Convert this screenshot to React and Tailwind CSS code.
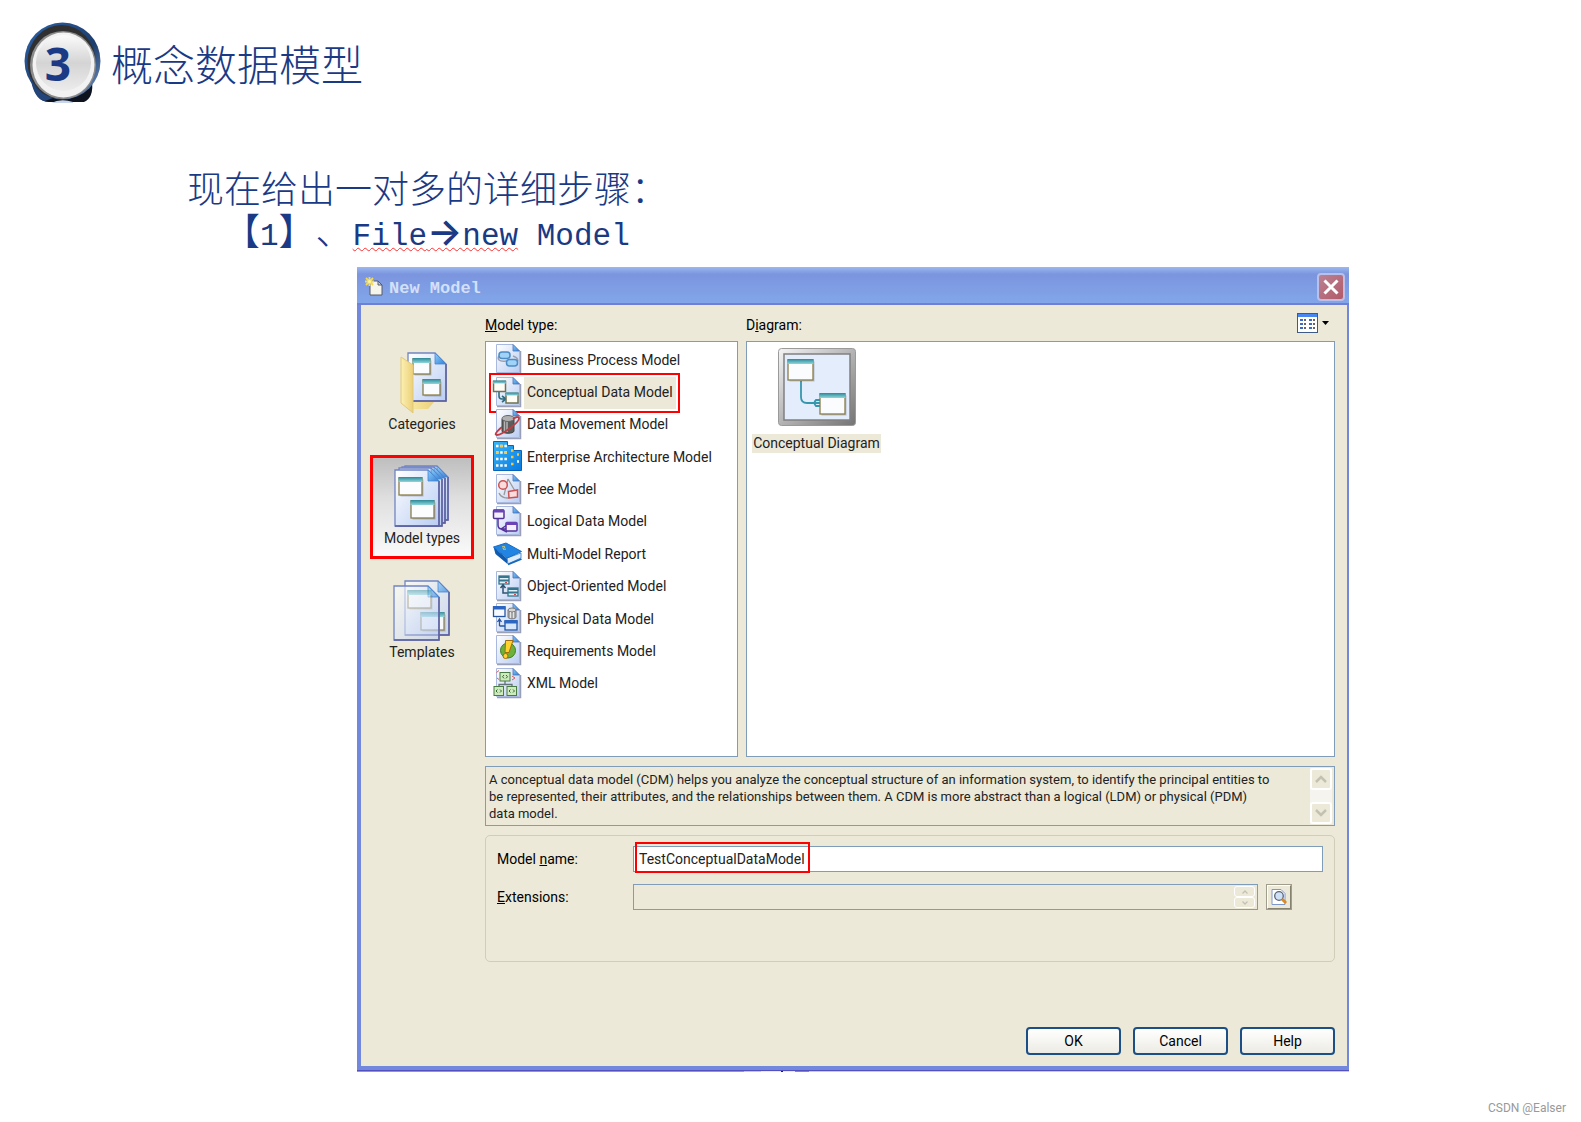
import { useState } from 'react';

const MODEL_TYPES = [
    { name: 'Business Process Model',        Icon: BusinessIcon },
    { name: 'Conceptual Data Model',         Icon: ConceptualIcon },
    { name: 'Data Movement Model',           Icon: MovementIcon },
    { name: 'Enterprise Architecture Model', Icon: EnterpriseIcon },
    { name: 'Free Model',                    Icon: FreeIcon },
    { name: 'Logical Data Model',            Icon: LogicalIcon },
    { name: 'Multi-Model Report',            Icon: ReportIcon },
    { name: 'Object-Oriented Model',         Icon: ObjectIcon },
    { name: 'Physical Data Model',           Icon: PhysicalIcon },
    { name: 'Requirements Model',            Icon: RequirementsIcon },
    { name: 'XML Model',                     Icon: XmlIcon },
];

const VIEWS = [
    { name: 'Categories',  Icon: CategoriesIcon },
    { name: 'Model types', Icon: ModelTypesIcon },
    { name: 'Templates',   Icon: TemplatesIcon },
];

const DESCRIPTION =
    'A conceptual data model (CDM) helps you analyze the conceptual structure of an information system, to identify the principal entities to be represented, their attributes, and the relationships between them. A CDM is more abstract than a logical (LDM) or physical (PDM) data model.';

/* ---------- icons ---------- */

// Shared gradients, referenced by id from every icon below
function Gradients() {
    return (
        <svg width="0" height="0" className="absolute" aria-hidden="true">
            <defs>
                <linearGradient id="paper" x1="0" y1="0" x2="1" y2="1">
                    <stop offset="0" stopColor="#ffffff" />
                    <stop offset="1" stopColor="#b9cdf3" />
                </linearGradient>
                <linearGradient id="fold" x1="0" y1="0" x2="1" y2="1">
                    <stop offset="0" stopColor="#8fd0fb" />
                    <stop offset="1" stopColor="#2f7fd8" />
                </linearGradient>
                <linearGradient id="teal" x1="0" y1="0" x2="0" y2="1">
                    <stop offset="0" stopColor="#2b8795" />
                    <stop offset="1" stopColor="#8ed6dc" />
                </linearGradient>
                <linearGradient id="folder" x1="0" y1="0" x2="1" y2="0">
                    <stop offset="0" stopColor="#fdf0b0" />
                    <stop offset="1" stopColor="#ebd07a" />
                </linearGradient>
                <linearGradient id="metal" x1="0" y1="0" x2="1" y2="1">
                    <stop offset="0" stopColor="#f4f4f4" />
                    <stop offset="0.5" stopColor="#b4b4b4" />
                    <stop offset="1" stopColor="#747474" />
                </linearGradient>
                <linearGradient id="building" x1="0" y1="0" x2="1" y2="1">
                    <stop offset="0" stopColor="#35b5f8" />
                    <stop offset="1" stopColor="#0a7ae0" />
                </linearGradient>
                <linearGradient id="knob" x1="0" y1="0" x2="0" y2="1">
                    <stop offset="0" stopColor="#fbfbfb" />
                    <stop offset="0.5" stopColor="#d4d4d4" />
                    <stop offset="1" stopColor="#ececec" />
                </linearGradient>
                <linearGradient id="rim" x1="0" y1="0" x2="1" y2="1">
                    <stop offset="0" stopColor="#2d62a8" />
                    <stop offset="0.6" stopColor="#1c3c6c" />
                    <stop offset="1" stopColor="#7d9cc8" />
                </linearGradient>
            </defs>
        </svg>
    );
}

function RowIcon({ page = true, children }) {
    return (
        <svg viewBox="0 0 32 32" className="size-8 shrink-0" fill="none" aria-hidden="true">
            {page && (
                <>
                    <path d="M5 29.500h23.500V7" stroke="#9a9fb8" strokeWidth="1.500" />
                    <path d="M4.500 0.500H21l6.500 6.500V28.500H4.500z" fill="url(#paper)" stroke="#a9b8de" />
                    <path d="M21 0.500V7h6.500z" fill="url(#fold)" stroke="#4a74b8" strokeWidth="0.800" />
                </>
            )}
            {children}
        </svg>
    );
}

function BusinessIcon() {
    return (
        <RowIcon>
            <path d="M14 17c-7 1-9-2-7-5M21 12c6 2 6 6 2 8" stroke="#9aa0b0" strokeWidth="1.500" />
            <rect x="7" y="8" width="11" height="6.500" rx="3" fill="#9fd3f7" stroke="#4d8cc4" strokeWidth="1.500" />
            <rect x="14.500" y="15.500" width="11" height="6.500" rx="3" fill="#9fd3f7" stroke="#4d8cc4" strokeWidth="1.500" />
        </RowIcon>
    );
}

function ConceptualIcon() {
    return (
        <RowIcon>
            <path d="M7 14v5q0 3 3 3h5M10 19l4 3-4 3" stroke="#2f6d80" strokeWidth="1.600" />
            <rect x="1.500" y="4.500" width="12" height="10" fill="#fdfdf6" stroke="#6d7251" strokeWidth="1.500" />
            <rect x="1" y="3.500" width="13" height="3" fill="url(#teal)" />
            <rect x="14" y="16.500" width="12" height="9.500" fill="#fdfdf6" stroke="#6d7251" strokeWidth="1.500" />
            <rect x="13.500" y="15.500" width="13" height="3" fill="url(#teal)" />
        </RowIcon>
    );
}

function MovementIcon() {
    return (
        <RowIcon>
            <path d="M10 10v12c0 3 12 3 12 0V10z" fill="#5c5c5c" stroke="#444" />
            <path d="M12.500 12v11M15 12v11" stroke="#b5b5b5" strokeWidth="1.500" />
            <ellipse cx="16" cy="9.500" rx="6" ry="3" fill="#b0b0b0" stroke="#666" />
            <path d="M10 18c-6 5-8 8-5 8 5 0 23-13 22-17-.5-2-4-.5-6 1" stroke="#c23b42" strokeWidth="1.800" />
        </RowIcon>
    );
}

function EnterpriseIcon() {
    return (
        <RowIcon page={false}>
            <path d="M1.500 0.500h14v4h6v5h8v20h-28z" fill="url(#building)" stroke="#0b63b8" />
            <path d="M4 5h11M4 11.500h11M4 18h11M4 24.500h11" stroke="#fff" strokeWidth="2.500" strokeDasharray="2.500 1.700" />
            <path d="M8.200 5h2.500M12.400 11.500h2.500M4 11.500h2.500" stroke="#ffc52e" strokeWidth="2.500" />
            <path d="M19 9.500h2.500M25 13.500h2M19 16h2.500M19 23h2.500" stroke="#ffc52e" strokeWidth="2.500" />
            <path d="M25 20.500h2" stroke="#fff" strokeWidth="2.500" />
        </RowIcon>
    );
}

function FreeIcon() {
    return (
        <RowIcon>
            <path d="M16 5l7 12M16 5l-4 16M7 19c2 5 8 6 12 4" stroke="#9a9a9a" strokeWidth="1.300" />
            <circle cx="11" cy="11" r="4.300" fill="#fbdcdc" stroke="#cc5252" strokeWidth="1.500" />
            <path d="M16.500 17.500l9-1.500v7l-8.500 1z" fill="#fbdcdc" stroke="#cc5252" strokeWidth="1.500" />
        </RowIcon>
    );
}

function LogicalIcon() {
    return (
        <RowIcon>
            <path d="M6 13v6q0 4 4 4h5M9 23l6-4M9 23l6 3" stroke="#54329c" strokeWidth="1.500" />
            <rect x="1.500" y="4" width="10.500" height="8.500" rx="1" fill="#f3effc" stroke="#54329c" strokeWidth="1.500" />
            <rect x="1.500" y="3.500" width="10.500" height="3" fill="#6b45b8" />
            <rect x="14" y="16.500" width="11" height="8.500" rx="1" fill="#f3effc" stroke="#54329c" strokeWidth="1.500" />
            <rect x="14" y="16" width="11" height="3" fill="#6b45b8" />
        </RowIcon>
    );
}

function ReportIcon() {
    return (
        <RowIcon page={false}>
            <path d="M1.500 9l2 7 12 10v-5z" fill="#0f5bb0" />
            <path d="M15 20l14-5v5l-13 6z" fill="#dcecfb" stroke="#2b78c8" strokeWidth="0.800" />
            <path d="M1.500 9L14 5l15.500 8.500L15 20z" fill="#2385e2" stroke="#1a6cc8" />
            <path d="M16 26.500l13.500-5.500" stroke="#1566bd" strokeWidth="1.800" />
            <path d="M10 9c3-1.500 4 .5 2 1s-1 2 2 1" stroke="#e4cf5a" />
        </RowIcon>
    );
}

function ObjectIcon() {
    return (
        <RowIcon>
            <rect x="7" y="5" width="10" height="8" fill="#dff0f8" stroke="#35758e" strokeWidth="1.300" />
            <path d="M7 6h10M7 9.500h10" stroke="#35758e" strokeWidth="2" />
            <path d="M11 13v9h6M8.500 17l2.500-3 2.500 3" stroke="#2f5372" strokeWidth="1.500" />
            <rect x="16" y="17" width="10" height="8" fill="#dff0f8" stroke="#35758e" strokeWidth="1.300" />
            <path d="M16 18h10M16 21.500h10" stroke="#35758e" strokeWidth="2" />
            <path d="M13 11.500h2M22 23.500h2" stroke="#d34444" />
        </RowIcon>
    );
}

function PhysicalIcon() {
    return (
        <RowIcon>
            <path d="M16 7v7c0 2.500 8 2.500 8 0V7z" fill="#a8a8a8" stroke="#7b7b7b" />
            <ellipse cx="20" cy="7" rx="4" ry="2" fill="#d5d5d5" stroke="#7b7b7b" />
            <path d="M18.500 9v6M21.500 9v6" stroke="#e4e4e4" />
            <rect x="1.500" y="4" width="11.500" height="9.500" fill="#f6faff" stroke="#2456a4" strokeWidth="1.300" />
            <rect x="1" y="3" width="12.500" height="3.500" fill="#2d66c0" />
            <path d="M7.500 23h6M7.500 16v7M5.500 19l2-3 2 3" stroke="#2456a4" strokeWidth="1.300" />
            <rect x="13" y="18" width="12" height="9" fill="#d6e6fb" stroke="#2456a4" strokeWidth="1.300" />
            <rect x="12.500" y="17" width="13" height="3.500" fill="#2d66c0" />
        </RowIcon>
    );
}

function RequirementsIcon() {
    return (
        <RowIcon>
            <circle cx="16" cy="15.500" r="7.500" fill="#6cb23a" stroke="#3f7d22" />
            <path d="M13.500 5.500h7.500l-4 12h-4z" fill="#ffd22e" stroke="#a06c10" />
            <circle cx="13.500" cy="21" r="2.500" fill="#ffd22e" stroke="#a06c10" />
        </RowIcon>
    );
}

function XmlIcon() {
    return (
        <RowIcon>
            <path d="M13 13v4M7 19v-2.500h13V19" stroke="#66717c" strokeWidth="1.300" />
            <rect x="8" y="4.500" width="10" height="8.500" fill="#cdebbd" stroke="#4b7b45" />
            <rect x="2" y="18.500" width="9.500" height="9" fill="#cdebbd" stroke="#4b7b45" />
            <rect x="15" y="18.500" width="9.500" height="9" fill="#cdebbd" stroke="#4b7b45" />
            <path d="M12 7l-1.500 1.700 1.500 1.700M14 7l1.500 1.700L14 10.400M5.500 21.500L4 23l1.500 1.500M8 21.500L9.500 23 8 24.500M18.500 21.500L17 23l1.500 1.500M21 21.500l1.500 1.500-1.500 1.500" stroke="#2f6a2d" />
            <path d="M7 2.500L4.500 4.500M20 8l3 2-3 2M7 11.500L5 10" stroke="#d95b5b" />
        </RowIcon>
    );
}

// Small entity window used by the large icons
function Entity({ x, y, w = 23, h = 17, opacity = 1 }) {
    return (
        <g opacity={opacity}>
            <rect x={x + 1.5} y={y + 1.5} width={w} height={h} fill="#00000030" />
            <rect x={x} y={y} width={w} height={h} fill="#fbfcfd" stroke="#8a7d4c" strokeWidth="1.300" />
            <rect x={x - 0.5} y={y - 1} width={w + 1} height="5" fill="url(#teal)" />
        </g>
    );
}

function Sheet({ x, y, w, h, f = 11, opacity = 1 }) {
    return (
        <g fillOpacity={opacity}>
            <path d={`M${x} ${y}h${w - f}l${f} ${f}v${h - f}h${-w}z`} fill="url(#paper)" stroke="#7084c4" strokeWidth="1.300" />
            <path d={`M${x + w} ${y + f}v${h - f}h${-w}`} stroke="#5c5f9c" strokeWidth="1.500" fill="none" />
            <path d={`M${x + w - f} ${y}v${f}h${f}z`} fill="url(#fold)" stroke="#4a86cf" strokeWidth="0.800" />
        </g>
    );
}

function CategoriesIcon() {
    return (
        <svg viewBox="0 0 64 64" className="size-16" aria-hidden="true">
            <path d="M12 50l32 2-6 7H20z" fill="url(#folder)" />
            <Sheet x={18} y={3} w={38} h={48} />
            <Entity x={23} y={9} w={17} h={15} />
            <Entity x={33} y={30} w={17} h={15} />
            <path d="M11 7l12 8v48L11 53z" fill="url(#folder)" stroke="#e2c978" />
        </svg>
    );
}

function ModelTypesIcon() {
    return (
        <svg viewBox="0 0 64 64" className="size-16" aria-hidden="true">
            <Sheet x={15} y={2} w={43} h={54} />
            <Sheet x={12} y={3} w={43} h={56} />
            <Sheet x={9} y={4} w={43} h={58} />
            <Sheet x={5} y={6} w={44} h={56} />
            <Entity x={9} y={14} />
            <Entity x={21} y={37} />
        </svg>
    );
}

function TemplatesIcon() {
    return (
        <svg viewBox="0 0 64 64" className="size-16" aria-hidden="true">
            <Sheet x={15} y={3} w={44} h={54} opacity={0.7} />
            <Entity x={31} y={35} opacity={0.9} />
            <Sheet x={4} y={8} w={45} h={54} opacity={0.6} />
            <Entity x={18} y={13} opacity={0.45} />
        </svg>
    );
}

function DiagramIcon() {
    return (
        <svg viewBox="0 0 78 78" className="size-[78px]" aria-hidden="true">
            <rect x="0.500" y="0.500" width="77" height="77" rx="3" fill="url(#metal)" stroke="#9a9a9a" />
            <rect x="6" y="6" width="66" height="66" fill="#e3edfc" stroke="#808080" strokeWidth="1.500" />
            <path d="M23 33v16q0 6 6 6h13M42 52h-4q-3 3 0 6h4" fill="none" stroke="#3597ae" strokeWidth="1.800" />
            <Entity x={10} y={12} w={25} h={20} />
            <Entity x={42} y={46} w={25} h={20} />
        </svg>
    );
}

function NewDocIcon() {
    return (
        <svg viewBox="0 0 20 20" className="size-5" aria-hidden="true">
            <path d="M5 4h8l4 4v10H5z" fill="#f6f5ec" stroke="#565a66" />
            <path d="M13 4v4h4z" fill="#c9cdd8" stroke="#565a66" />
            <path d="M4.500 0v9M0 4.500h9M1 1l7 7M8 1L1 8" stroke="#f5d94a" strokeWidth="1.800" />
            <circle cx="4.500" cy="4.500" r="1.500" fill="#fff6b8" />
        </svg>
    );
}

function ListViewIcon() {
    return (
        <svg viewBox="0 0 21 20" className="h-5 w-[21px]" aria-hidden="true">
            <rect x="0.500" y="0.500" width="20" height="19" fill="#fff" stroke="#3c5a8a" />
            <rect x="1" y="1" width="19" height="3" fill="#4a86f0" />
            <path d="M3 7h3M12 7h3M3 11h3M12 11h3M3 15h3M12 15h3" stroke="#3d68c4" strokeWidth="2" />
            <path d="M7 7h2M16 7h2M7 11h2M16 11h2M7 15h2M16 15h2" stroke="#333" strokeWidth="1.500" />
        </svg>
    );
}

function BrowseIcon() {
    return (
        <svg viewBox="0 0 18 18" className="size-[18px]" aria-hidden="true">
            <path d="M2 1.500h9l4 4v11H2z" fill="#fff" stroke="#7e98c8" />
            <circle cx="9" cy="8" r="4.300" fill="#cfe2f5" stroke="#5a6478" strokeWidth="1.300" />
            <path d="M12 11l4 4" stroke="#d98a2b" strokeWidth="3" />
        </svg>
    );
}

function Chevron({ up = false, className }) {
    return (
        <svg viewBox="0 0 12 8" className={className} fill="none" aria-hidden="true">
            <path d={up ? 'M1 7l5-5 5 5' : 'M1 1l5 5 5-5'} stroke="#c3c2b2" strokeWidth="2.500" />
        </svg>
    );
}

function Badge() {
    return (
        <div className="relative grid h-[81px] w-[78px] place-items-center">
            <svg viewBox="0 0 78 81" className="absolute inset-0" aria-hidden="true">
                <path d="M7 56q4 24 18 24h35q10-4 8-22z" fill="#0d1420" />
                <path d="M6 54q4 24 15 25l8-3-14-22z" fill="#24447a" />
                <path d="M27 81q10-5 22-1v1z" fill="#c8d5ea" />
                <ellipse cx="38.500" cy="39" rx="38" ry="38.500" fill="url(#rim)" />
                <ellipse cx="37.500" cy="40" rx="34" ry="37" fill="#303030" />
                <ellipse cx="39" cy="43" rx="33" ry="34" fill="#8c8c8c" />
                <ellipse cx="39.500" cy="43" rx="31" ry="32.500" fill="#f2f2f2" />
                <ellipse cx="39.500" cy="41" rx="27.500" ry="28" fill="url(#knob)" />
            </svg>
            <span className="relative pr-[10px] font-['Open_Sans',sans-serif] text-[46px]/[64px] font-bold">3</span>
        </div>
    );
}

/* ---------- dialog ---------- */

function ViewBar({ view, onSelect }) {
    return (
        <nav className="flex w-[124px] shrink-0 flex-col gap-[10px] pt-9 pl-[9px]">
            {VIEWS.map(({ name, Icon }) => (
                <button key={name} onClick={() => onSelect(name)}
                    className={`flex size-[104px] flex-col items-center border-[3px] pt-[6px] ${
                        view === name ? 'border-[#ff0000] bg-linear-to-b from-[#bebebe] via-[#dedede] via-40% to-[#fafafa]' : 'border-transparent'
                    }`}>
                    <Icon />
                    <span className="leading-5">{name}</span>
                </button>
            ))}
        </nav>
    );
}

function ModelTypeList({ selected, onSelect }) {
    return (
        <ul className="flex h-[416px] flex-col border border-[#7f9db9] bg-white pt-[2px] pb-[56px] pl-px">
            {MODEL_TYPES.map(({ name, Icon }) => (
                <li key={name} className="flex min-h-0 flex-1 items-center">
                    <button onClick={() => onSelect(name)} className="relative flex items-center pl-[5px] text-left">
                        <Icon />
                        <span className={`flex h-8 items-center pr-[3px] pl-[3px] ${selected === name ? 'bg-[#ece9d8]' : ''}`}>
                            {name}
                        </span>
                        {selected === name && (
                            <span className="absolute -inset-y-1 -right-1 left-[2px] border-2 border-[#ff0000]" />
                        )}
                    </button>
                </li>
            ))}
        </ul>
    );
}

function DialogButton({ children }) {
    return (
        <button className="h-7 w-[95px] rounded-[4px] border-2 border-[#1c4f86] bg-linear-to-b from-white to-[#ecebe4] text-black">
            {children}
        </button>
    );
}

function NewModelDialog() {
    const [view, setView] = useState('Model types');
    const [type, setType] = useState('Conceptual Data Model');
    const [modelName, setModelName] = useState('TestConceptualDataModel');

    return (
        <section className="mr-[232px] ml-[357px] font-[Roboto,sans-serif] text-[14px] text-[#222]">
            <header className="flex h-[38px] items-center border-b-2 border-[#6d80d6] bg-linear-to-b from-[#9cb8ee] via-[#7b95de] via-20% to-[#82a6ea] pt-1 pr-1 pl-2">
                <NewDocIcon />
                <h2 className="ml-1 flex-1 pt-1 font-['Liberation_Mono',monospace] text-[17px] font-bold text-[#d3e0f8]">New Model</h2>
                <button aria-label="Close"
                    className="grid size-7 place-items-center rounded-[4px] border-2 border-[#b9c0ea] bg-linear-to-br from-[#b98295] to-[#b25a68]">
                    <svg viewBox="0 0 16 16" className="size-4" aria-hidden="true">
                        <path d="M1.500 1.500l13 13M14.500 1.500l-13 13" stroke="#fff" strokeWidth="3" />
                    </svg>
                </button>
            </header>

            <div className="flex border-r-2 border-b-4 border-l-4 border-[#7288dc] bg-[#ece9d8]">
                <ViewBar view={view} onSelect={setView} />

                <div className="min-w-0 flex-1 pr-3 pb-[11px]">
                    <div className="flex gap-2">
                        <div className="w-[253px] shrink-0">
                            <h3 className="flex h-9 items-center pt-1 text-black"><span><u>M</u>odel type:</span></h3>
                            <ModelTypeList selected={type} onSelect={setType} />
                        </div>
                        <div className="min-w-0 flex-1">
                            <div className="flex h-9 items-center justify-between pt-1">
                                <h3 className="text-black">D<u>i</u>agram:</h3>
                                <button aria-label="View" className="mr-[6px] flex items-center gap-1 pb-1">
                                    <ListViewIcon />
                                    <svg viewBox="0 0 7 4" className="h-1 w-[7px]" aria-hidden="true"><path d="M0 0h7L3.500 4z" /></svg>
                                </button>
                            </div>
                            <div className="h-[416px] border border-[#7f9db9] bg-white pt-[6px] pl-[5px]">
                                <button className="flex w-[129px] flex-col items-center gap-2">
                                    <DiagramIcon />
                                    <span className="w-full bg-[#ece9d8] leading-[19px] whitespace-nowrap">Conceptual Diagram</span>
                                </button>
                            </div>
                        </div>
                    </div>

                    {/* Description */}
                    <div className="mt-[9px] flex h-[60px] border border-[#7f9db9] py-px pr-[2px]">
                        <textarea readOnly aria-label="Description" value={DESCRIPTION}
                            className="min-w-0 flex-1 resize-none overflow-hidden pt-[3px] pr-9 pl-[3px] text-[13px] leading-[17px] outline-none" />
                        <div className="flex w-[22px] flex-col justify-between bg-[#f5f4ee]">
                            <button disabled aria-label="Scroll up" className="grid h-[22px] place-items-center rounded-[3px] border-2 border-white bg-[#ece9d8]">
                                <Chevron up className="h-2 w-3" />
                            </button>
                            <button disabled aria-label="Scroll down" className="grid h-[22px] place-items-center rounded-[3px] border-2 border-white bg-[#ece9d8]">
                                <Chevron className="h-2 w-3" />
                            </button>
                        </div>
                    </div>

                    {/* Name and extensions */}
                    <div className="mt-[9px] flex h-[127px] flex-col gap-3 rounded-[5px] border border-[#cfceb8] px-[11px] pt-[10px]">
                        <div className="flex h-[26px] items-center">
                            <label htmlFor="model-name" className="w-[136px] shrink-0 text-black">Model <u>n</u>ame:</label>
                            <div className="relative h-full flex-1">
                                <input id="model-name" value={modelName} onChange={(e) => setModelName(e.target.value)}
                                    className="size-full border border-[#7f9db9] bg-white pl-[5px] outline-none" />
                                <span className="pointer-events-none absolute -top-1 -bottom-px left-[2px] w-[175px] border-2 border-[#ff0000]" />
                            </div>
                        </div>
                        <div className="flex h-[26px] items-center">
                            <label htmlFor="extensions" className="w-[136px] shrink-0 text-black"><u>E</u>xtensions:</label>
                            <div className="flex h-full flex-1 border border-[#7f9db9] py-px pr-[2px]">
                                <input id="extensions" readOnly className="min-w-0 flex-1 outline-none" />
                                <div className="flex w-[21px] flex-col">
                                    <button disabled aria-label="Previous" className="grid flex-1 place-items-center rounded-[3px] border border-white">
                                        <Chevron up className="h-1 w-[6px]" />
                                    </button>
                                    <button disabled aria-label="Next" className="grid flex-1 place-items-center rounded-[3px] border border-white">
                                        <Chevron className="h-1 w-[6px]" />
                                    </button>
                                </div>
                            </div>
                            <button aria-label="Browse extensions"
                                className="mr-[31px] ml-2 grid size-[26px] place-items-center border-2 border-t-white border-r-[#85826f] border-b-[#85826f] border-l-white outline-1 -outline-offset-1 outline-[#a09d8c]">
                                <BrowseIcon />
                            </button>
                        </div>
                    </div>

                    <div className="mt-[65px] flex justify-end gap-3">
                        <DialogButton>OK</DialogButton>
                        <DialogButton>Cancel</DialogButton>
                        <DialogButton>Help</DialogButton>
                    </div>
                </div>
            </div>
            <div className="h-px bg-[#5450c0]" />
            {/* Sliver of the window behind */}
            <div className="flex h-px">
                <span className="w-[387px] bg-[#8d93dc]" />
                <span className="w-[17px] bg-[#b4c8fa]" />
                <span className="w-5 bg-[#efe6dc]" />
                <span className="w-[2px] bg-[#222]" />
                <span className="w-3 bg-[#efe6dc]" />
                <span className="w-[14px] bg-[#8e8a84]" />
                <span className="flex-1 bg-[#d6ccb4]" />
            </div>
        </section>
    );
}

function Mono({ children }) {
    return <span className="font-['Liberation_Mono',monospace] text-[31px] leading-none">{children}</span>;
}

export default function App() {
    return (
        <main className="bg-white text-[#1a3a85]">
            <Gradients />
            <header className="flex items-center gap-[9px] pt-[22px] pl-6">
                <Badge />
                <h1 className="font-['Noto_Sans_CJK_SC',sans-serif] text-[42px]/[60px] font-light">概念数据模型</h1>
            </header>

            <div className="mt-[63px] pl-[187px] font-['Noto_Sans_CJK_SC',sans-serif] text-[37px] font-light whitespace-nowrap [text-spacing-trim:space-all]">
                <p className="h-11 leading-[42px]">现在给出一对多的详细步骤：</p>
                <p className="h-11 pl-9 leading-[38px]">
                    【<Mono>1</Mono>】、
                    <span className="underline decoration-[#ff3030] decoration-wavy decoration-1 underline-offset-2">
                        <Mono>File</Mono>
                        <span className="font-[Inter,sans-serif] text-[37px] leading-none font-semibold">→</span>
                        <Mono>new</Mono>
                    </span>
                    <Mono>&nbsp;Model</Mono>
                </p>
            </div>

            <div className="pt-[13px]">
                <NewModelDialog />
            </div>

            <footer className="mt-7 pr-[15px] text-right font-[Roboto,sans-serif] text-[12px]/[16px] text-[#999]">CSDN @Ealser</footer>
        </main>
    );
}
